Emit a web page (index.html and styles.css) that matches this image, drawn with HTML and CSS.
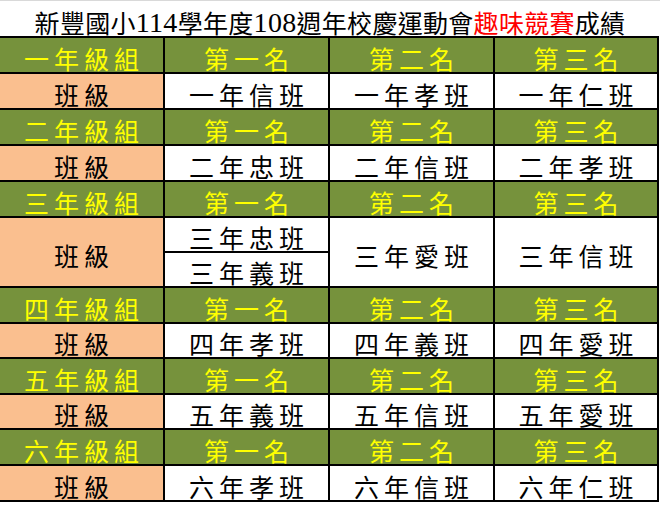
FILE: index.html
```html
<!DOCTYPE html>
<html lang="zh-Hant">
<head>
<meta charset="utf-8">
<title>新豐國小114學年度108週年校慶運動會趣味競賽成績</title>
<link rel="stylesheet" href="styles.css">
</head>
<body>
<div class="sheet">
  <div class="title">新豐國小<span class="num">114</span>學年度<span class="num">108</span>週年校慶運動會<span class="red">趣味競賽</span>成績</div>
  <div class="table">
    <div class="cell head">一年級組</div>
    <div class="cell head">第一名</div>
    <div class="cell head">第二名</div>
    <div class="cell head">第三名</div>
    <div class="cell label">班級</div>
    <div class="cell data">一年信班</div>
    <div class="cell data">一年孝班</div>
    <div class="cell data">一年仁班</div>

    <div class="cell head">二年級組</div>
    <div class="cell head">第一名</div>
    <div class="cell head">第二名</div>
    <div class="cell head">第三名</div>
    <div class="cell label">班級</div>
    <div class="cell data">二年忠班</div>
    <div class="cell data">二年信班</div>
    <div class="cell data">二年孝班</div>

    <div class="cell head">三年級組</div>
    <div class="cell head">第一名</div>
    <div class="cell head">第二名</div>
    <div class="cell head">第三名</div>
    <div class="cell label span2 mid">班級</div>
    <div class="cell data">三年忠班</div>
    <div class="cell data span2 mid">三年愛班</div>
    <div class="cell data span2 mid">三年信班</div>
    <div class="cell data">三年義班</div>

    <div class="cell head">四年級組</div>
    <div class="cell head">第一名</div>
    <div class="cell head">第二名</div>
    <div class="cell head">第三名</div>
    <div class="cell label">班級</div>
    <div class="cell data">四年孝班</div>
    <div class="cell data">四年義班</div>
    <div class="cell data">四年愛班</div>

    <div class="cell head">五年級組</div>
    <div class="cell head">第一名</div>
    <div class="cell head">第二名</div>
    <div class="cell head">第三名</div>
    <div class="cell label">班級</div>
    <div class="cell data">五年義班</div>
    <div class="cell data">五年信班</div>
    <div class="cell data">五年愛班</div>

    <div class="cell head">六年級組</div>
    <div class="cell head">第一名</div>
    <div class="cell head">第二名</div>
    <div class="cell head">第三名</div>
    <div class="cell label">班級</div>
    <div class="cell data">六年孝班</div>
    <div class="cell data">六年信班</div>
    <div class="cell data">六年仁班</div>
  </div>
</div>
</body>
</html>
```

FILE: styles.css
```css
html, body {
  margin: 0;
  padding: 0;
  background: #ffffff;
}

body {
  font-family: "Noto Sans CJK TC", "Noto Sans CJK SC", sans-serif;
  color: #000000;
}

.sheet {
  width: 660px;
  height: 506px;
  overflow: hidden;
}

.title {
  height: 36px;
  box-sizing: border-box;
  border-top: 1px solid #d9d9d9;
  display: flex;
  align-items: flex-end;
  justify-content: center;
  font-size: 25px;
  line-height: 25px;
  padding-bottom: 1px;
  letter-spacing: 0.3px;
  white-space: nowrap;
}

.title .num {
  font-family: "Liberation Serif", serif;
  font-size: 28px;
  line-height: 25px;
}

.title .red {
  color: #ff0000;
}

.table {
  width: 659px;
  box-sizing: border-box;
  display: grid;
  grid-template-columns: 163px 163px 163px 162px;
  grid-template-rows: 34px 34px 34px 34px 34px 33px 33px 34px 33px 34px 33px 34px 34px;
  gap: 2px;
  background: #000000;
  border-top: 2px solid #000000;
  border-bottom: 2px solid #000000;
  border-right: 2px solid #000000;
}

.cell {
  display: flex;
  align-items: flex-end;
  justify-content: center;
  font-size: 25px;
  line-height: 25px;
  letter-spacing: 5px;
  padding-left: 5px;
  padding-bottom: 1px;
  box-sizing: border-box;
  white-space: nowrap;
}

.head {
  background: #76923c;
  color: #ffff00;
}

.label {
  background: #fabf8f;
  color: #000000;
}

.data {
  background: #ffffff;
  color: #000000;
}

.span2 {
  grid-row: span 2;
}

.mid {
  align-items: center;
  padding-bottom: 0;
  padding-top: 6px;
}
```
